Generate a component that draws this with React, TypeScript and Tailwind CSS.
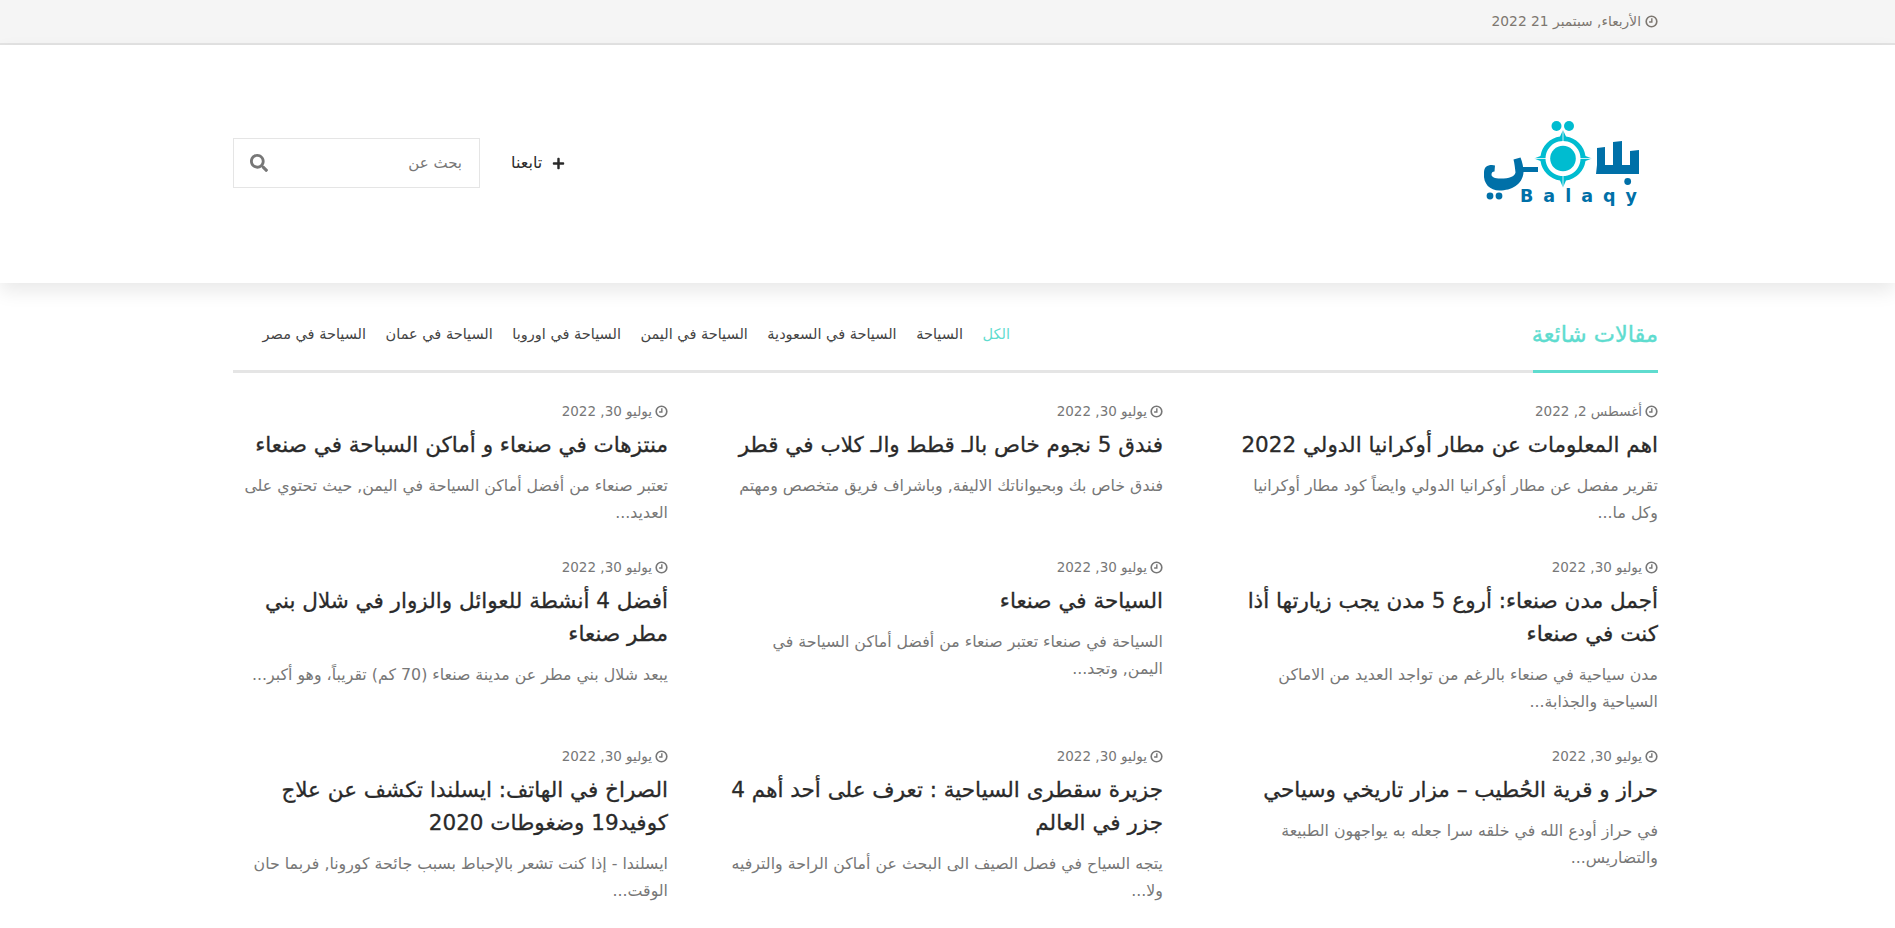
import { FaPlus, FaSearch } from "react-icons/fa";

const tabs = [
  "الكل",
  "السياحة",
  "السياحة في السعودية",
  "السياحة في اليمن",
  "السياحة في اوروبا",
  "السياحة في عمان",
  "السياحة في مصر",
];

const posts = [
  {
    date: "أغسطس 2, 2022",
    title: "اهم المعلومات عن مطار أوكرانيا الدولي 2022",
    text: "تقرير مفصل عن مطار أوكرانيا الدولي وايضاً كود مطار أوكرانيا\nوكل ما...",
  },
  {
    date: "يوليو 30, 2022",
    title: "فندق 5 نجوم خاص بالـ قطط والـ كلاب في قطر",
    text: "فندق خاص بك وبحيواناتك الاليفة, وباشراف فريق متخصص ومهتم",
  },
  {
    date: "يوليو 30, 2022",
    title: "منتزهات في صنعاء و أماكن السباحة في صنعاء",
    text: "تعتبر صنعاء من أفضل أماكن السياحة في اليمن, حيث تحتوي على العديد...",
  },
  {
    date: "يوليو 30, 2022",
    title: "أجمل مدن صنعاء: أروع 5 مدن يجب زيارتها أذا كنت في صنعاء",
    text: "مدن سياحية في صنعاء بالرغم من تواجد العديد من الاماكن\nالسياحية والجذابة...",
  },
  {
    date: "يوليو 30, 2022",
    title: "السياحة في صنعاء",
    text: "السياحة في صنعاء تعتبر صنعاء من أفضل أماكن السياحة في\nاليمن, وتجد...",
  },
  {
    date: "يوليو 30, 2022",
    title: "أفضل 4 أنشطة للعوائل والزوار في شلال بني مطر صنعاء",
    text: "يبعد شلال بني مطر عن مدينة صنعاء (70 كم) تقريباً، وهو أكبر...",
  },
  {
    date: "يوليو 30, 2022",
    title: "حراز و قرية الحُطيب – مزار تاريخي وسياحي",
    text: "في حراز أودع الله في خلقه سرا جعله به يواجهون الطبيعة والتضاريس...",
  },
  {
    date: "يوليو 30, 2022",
    title: "جزيرة سقطرى السياحية : تعرف على أحد أهم 4 جزر في العالم",
    text: "يتجه السياح في فصل الصيف الى البحث عن أماكن الراحة والترفيه ولا...",
  },
  {
    date: "يوليو 30, 2022",
    title: "الصراخ في الهاتف: ايسلندا تكشف عن علاج كوفيد19 وضغوطات 2020",
    text: "ايسلندا - إذا كنت تشعر بالإحباط بسبب جائحة كورونا, فربما حان الوقت...",
  },
];

const ClockIcon = () => (
  <svg viewBox="0 0 12 12" className="w-[13px] h-[13px] shrink-0" fill="none" stroke="currentColor">
    <circle cx="6" cy="6" r="4.900" strokeWidth="1.500" />
    <path d="M6.300 3V6.500H3.800" strokeWidth="1.300" />
  </svg>
);

const Logo = () => (
  <div className="relative w-[160px] h-[88px]">
    <svg viewBox="0 0 160 88" className="w-[160px] h-[88px]">
      <g transform="translate(4 0)">
        <g fill="#00bcd0">
          <circle cx="73.500" cy="5" r="5" />
          <circle cx="86" cy="5" r="5" />
          <circle cx="80" cy="37.500" r="12.800" />
          <path
            d="M80 9l3 6.500a23 23 0 0 1 19.500 19.500l6.500 2.500-6.500 2.500a23 23 0 0 1-19.500 19.500l-3 7-3-7a23 23 0 0 1-19.500-19.500l-6.500-2.500 6.500-2.500a23 23 0 0 1 19.500-19.500zM80 20a17.500 17.500 0 1 0 .01 0z"
            fillRule="evenodd"
          />
        </g>
        <path d="M80 9v12M80 54v13M51 37.500h12M97 37.500h12" stroke="#fff" strokeWidth="0.800" />
        <g fill="#0070a8">
          <path d="M156 29v24h-43l1-9h33V30z" />
          <path d="M130 21l9-1v33h-9z" />
          <path d="M114 27l8-1v27h-8z" />
          <path d="M34 46h21v5H34z" />
          <path d="M1 52c0-6 3-8 8-8l3 .5-.5 6c-2 0-3 1-3 3 0 2.500 3 4 9 4 9 0 14-2 15-6-.5-5-1-9-2-13l7-2c2 5 3 10 3 15-1 12-12 18-24 18C7 69.500 0 63 1 52z" />
          <circle cx="144.700" cy="60.500" r="3.400" />
          <circle cx="7" cy="75" r="3.400" />
          <circle cx="16" cy="75" r="3.400" />
        </g>
      </g>
    </svg>
    <span
      dir="ltr"
      className="absolute left-[41px] top-[64px] text-[17.5px] leading-[22px] font-bold tracking-[10px] text-[#0070a8]"
    >
      Balaqy
    </span>
  </div>
);

const PostCard = ({ post }: { post: (typeof posts)[number] }) => (
  <article className="pb-[32px]">
    <div className="flex items-center gap-[3px] h-[19px] text-[13.5px] leading-[19px] text-[#777]">
      <ClockIcon />
      <span>{post.date}</span>
    </div>
    <h3 className="mt-[7px] text-[21.5px] leading-[33px] font-normal text-[#2a2a2a] [-webkit-text-stroke:0.3px_#2a2a2a]">
      {post.title}
    </h3>
    <p className="mt-[12px] text-[15.8px] leading-[26.5px] text-[#777] whitespace-pre-line">{post.text}</p>
  </article>
);

export default function App() {
  return (
    <div dir="rtl" className="h-[928px] overflow-hidden bg-white font-['DejaVu_Sans',sans-serif]">
      {/* top bar */}
      <div className="h-[45px] bg-[#f5f5f5] border-b-2 border-[#e3e3e3]">
        <div className="w-[1425px] mr-[237px] flex items-center gap-[4px] h-full text-[13.8px] text-[#7d7770]">
          <ClockIcon />
          <span>الأربعاء, سبتمبر 21 2022</span>
        </div>
      </div>

      {/* header */}
      <header className="h-[238px] shadow-[0_8px_18px_rgba(0,0,0,0.09)]">
        <div className="w-[1425px] mr-[237px] h-full flex items-center justify-between">
          <div className="mr-[19px] mt-[2px]">
            <Logo />
          </div>
          <div className="flex items-center gap-[31px] -mt-[2px]">
            <div className="flex items-center gap-[10px] text-[16px] text-[#2a2a2a]">
              <FaPlus className="w-[13px] h-[13px]" />
              <span>تابعنا</span>
            </div>
            <div className="w-[247px] h-[50px] border border-[#e5e5e5] flex items-center justify-between pr-[17px] pl-4 text-[15px] text-[#777]">
              <span>بحث عن</span>
              <FaSearch className="w-[18px] h-[18px]" />
            </div>
          </div>
        </div>
      </header>

      {/* popular posts */}
      <main className="w-[1425px] mr-[237px]">
        <div className="h-[90px] flex items-center border-b-[3px] border-[#e5e5e5] relative">
          <h2 className="mt-[16px] text-[22.5px] text-[#5fdccf] font-normal [-webkit-text-stroke:0.4px_#5fdccf] w-[648px]">
            مقالات شائعة
          </h2>
          <nav className="mt-[16px] flex gap-[19.5px] text-[14.5px] text-[#444]">
            {tabs.map((tab, i) => (
              <a key={tab} className={i === 0 ? "text-[#5fdccf]" : ""}>
                {tab}
              </a>
            ))}
          </nav>
          <span className="absolute right-0 -bottom-[3px] w-[125px] h-[3px] bg-[#5fdccf]" />
        </div>

        <div className="grid grid-cols-3 gap-x-[60px] pt-[29px]">
          {posts.map((post) => (
            <PostCard key={post.title} post={post} />
          ))}
        </div>
      </main>
    </div>
  );
}
